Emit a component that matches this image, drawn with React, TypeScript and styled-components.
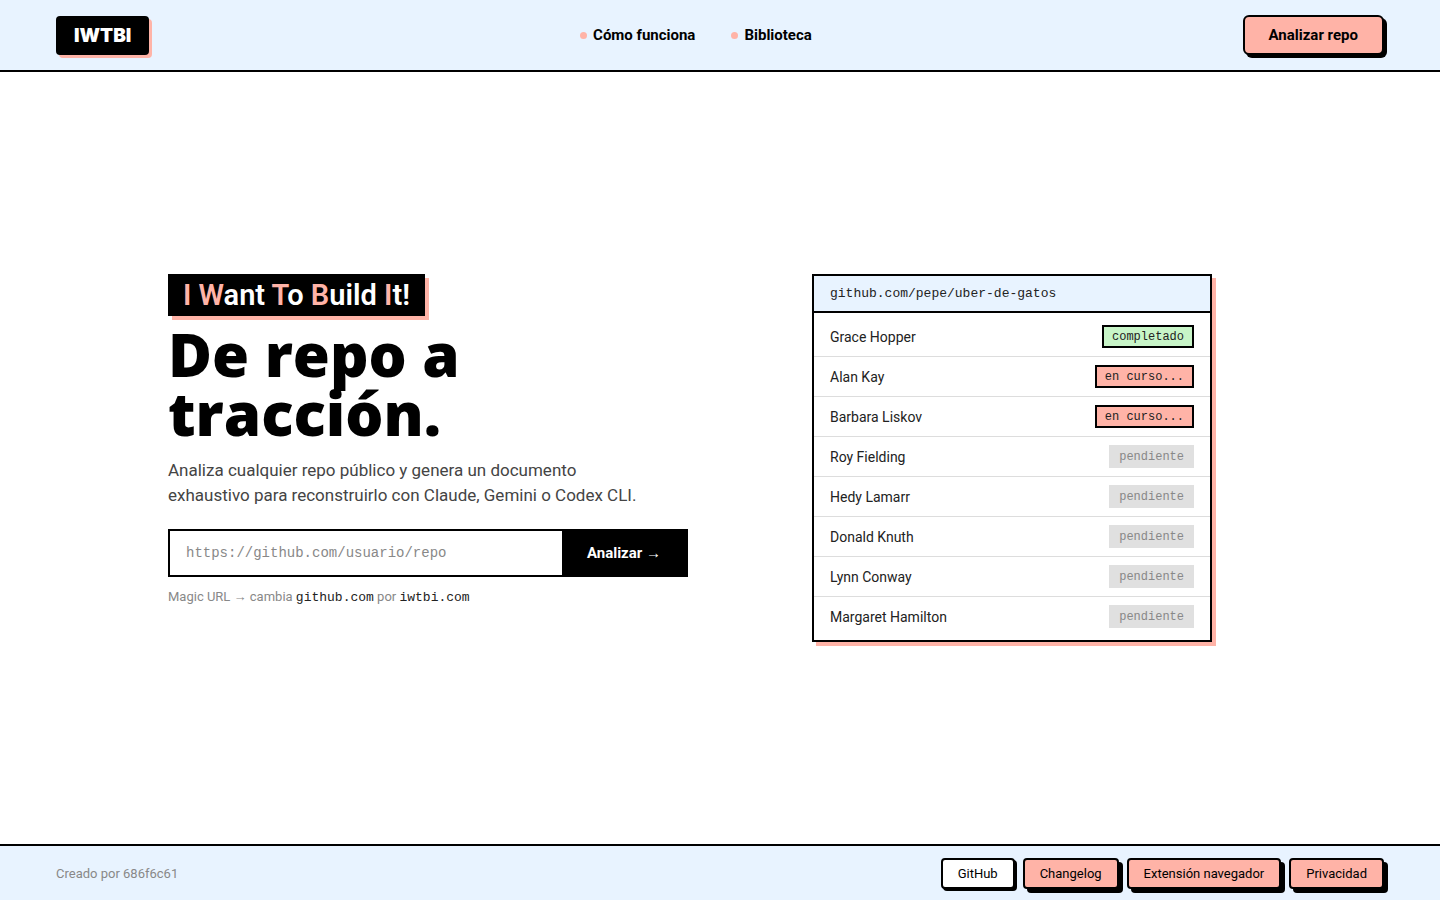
import React from "react";
import styled, { createGlobalStyle } from "styled-components";

const coral = "#ffb3a7";
const ice = "#e8f3ff";
const sans = `Roboto, "Liberation Sans", sans-serif`;
const display = `"Open Sans", Inter, sans-serif`;
const mono = `"Liberation Mono", monospace`;

const GlobalStyle = createGlobalStyle`
  *, *::before, *::after { box-sizing: border-box; }
  body {
    margin: 0;
    background: #fff;
    color: #222;
    font-family: ${sans};
  }
  button, input { font: inherit; }
  a { color: inherit; text-decoration: none; }
`;

const Page = styled.div`
  display: flex;
  flex-direction: column;
  min-height: 100vh;
`;

const Header = styled.header`
  display: flex;
  align-items: center;
  justify-content: space-between;
  height: 72px;
  padding: 0 56px;
  background: ${ice};
  border-bottom: 2px solid #000;
`;

const Logo = styled.a`
  padding: 8px 18px;
  border-radius: 4px;
  background: #000;
  color: #fff;
  box-shadow: 3px 3px 0 ${coral};
  font-family: Inter, sans-serif;
  font-size: 19px;
  font-weight: 900;
  line-height: 23px;
`;

const Nav = styled.nav`
  display: flex;
  gap: 36px;
`;

const NavLink = styled.a`
  display: flex;
  align-items: center;
  gap: 6px;
  color: #000;
  font-size: 15px;
  font-weight: 700;
  line-height: 20px;

  &::before {
    content: "";
    width: 7px;
    height: 7px;
    border-radius: 50%;
    background: ${coral};
  }
`;

const HeaderButton = styled.button`
  height: 40px;
  padding: 0 24px;
  border: 2px solid #000;
  border-radius: 6px;
  background: ${coral};
  color: #000;
  box-shadow: 3px 3px 0 #000;
  font-size: 15px;
  font-weight: 700;
  cursor: pointer;
`;

const Main = styled.main`
  flex: 1;
  display: grid;
  place-content: center;
  grid-template-columns: minmax(0, 1200px);
`;

const Hero = styled.div`
  display: grid;
  grid-template-columns: 1fr 1fr;
  gap: 64px;
  align-items: start;
  padding: 0 48px;
`;

const Intro = styled.section`
  display: flex;
  flex-direction: column;
  align-items: flex-start;
`;

const Tagline = styled.p`
  margin: 0;
  padding: 4px 15px;
  background: #000;
  color: #fff;
  box-shadow: 4px 4px 0 ${coral};
  font-size: 29px;
  font-weight: 600;
  line-height: 34px;

  b {
    color: ${coral};
    font-weight: inherit;
  }
`;

const Title = styled.h1`
  margin: 9px 0 0;
  color: #000;
  font-family: ${display};
  font-size: 60px;
  font-weight: 800;
  line-height: 59px;
`;

const Lead = styled.p`
  max-width: 480px;
  margin: 15px 0 0;
  color: #444;
  font-size: 17px;
  line-height: 25px;
`;

const RepoForm = styled.form`
  display: flex;
  width: 100%;
  height: 48px;
  margin-top: 21px;
  border: 2px solid #000;
`;

const RepoInput = styled.input`
  flex: 1;
  min-width: 0;
  padding: 0 16px;
  border: 0;
  outline: 0;
  background: #fff;
  color: #222;
  font-family: ${mono};
  font-size: 14px;

  &::placeholder { color: #888; opacity: 1; }
`;

const SubmitButton = styled.button`
  padding: 0 25px;
  border: 0;
  background: #000;
  color: #fff;
  font-size: 15px;
  font-weight: 700;
  cursor: pointer;
`;

const Arrow = styled.span`
  font-family: "Liberation Sans", sans-serif;
  font-weight: 400;
`;

const Hint = styled.p`
  margin: 10px 0 0;
  color: #888;
  font-size: 13px;
  line-height: 20px;

  code {
    color: #222;
    font-family: ${mono};
  }
`;

const Card = styled.section`
  justify-self: center;
  width: 100%;
  max-width: 400px;
  border: 2px solid #000;
  background: #fff;
  box-shadow: 4px 4px 0 ${coral};
`;

const CardTitle = styled.h2`
  margin: 0;
  padding: 8px 16px 7px;
  border-bottom: 2px solid #000;
  background: ${ice};
  color: #222;
  font-family: ${mono};
  font-size: 13px;
  font-weight: 400;
  line-height: 20px;
`;

const People = styled.ul`
  margin: 0;
  padding: 4px 0;
  list-style: none;
`;

const Person = styled.li`
  display: flex;
  align-items: center;
  justify-content: space-between;
  padding: 8px 16px;
  font-size: 14px;
  line-height: 23px;

  & + & { border-top: 1px solid #ddd; }
`;

const PersonName = styled.span`
  padding-top: 1px;
  line-height: 22px;
`;

type Status = "completado" | "en curso..." | "pendiente";

const statusFill: Record<Status, string> = {
  completado: "#c8f5c8",
  "en curso...": coral,
  pendiente: "#e0e0e0",
};

const Badge = styled.span<{ $status: Status }>`
  padding: 1px 8px 0;
  border: 2px solid ${(p) => (p.$status === "pendiente" ? "#e0e0e0" : "#000")};
  background: ${(p) => statusFill[p.$status]};
  color: ${(p) => (p.$status === "pendiente" ? "#888" : "#222")};
  font-family: ${mono};
  font-size: 12px;
  line-height: 18px;
`;

const Footer = styled.footer`
  display: flex;
  align-items: center;
  justify-content: space-between;
  height: 56px;
  padding: 0 56px;
  border-top: 2px solid #000;
  background: ${ice};
  color: #888;
  font-size: 13px;
`;

const FooterNav = styled.nav`
  display: flex;
  gap: 8px;
`;

const FooterLink = styled.a<{ $plain?: boolean }>`
  padding: 4px 15px;
  border: 2px solid #000;
  border-radius: 4px;
  background: ${(p) => (p.$plain ? "#fff" : coral)};
  color: #000;
  box-shadow: ${(p) => (p.$plain ? "2px 2px" : "4px 4px")} 0 #000;
  font-size: 13px;
  line-height: 19px;
`;

const people: { name: string; status: Status }[] = [
  { name: "Grace Hopper", status: "completado" },
  { name: "Alan Kay", status: "en curso..." },
  { name: "Barbara Liskov", status: "en curso..." },
  { name: "Roy Fielding", status: "pendiente" },
  { name: "Hedy Lamarr", status: "pendiente" },
  { name: "Donald Knuth", status: "pendiente" },
  { name: "Lynn Conway", status: "pendiente" },
  { name: "Margaret Hamilton", status: "pendiente" },
];

export default function App() {
  return (
    <Page>
      <GlobalStyle />
      <Header>
        <Logo href="#">IWTBI</Logo>
        <Nav>
          <NavLink href="#como-funciona">Cómo funciona</NavLink>
          <NavLink href="#biblioteca">Biblioteca</NavLink>
        </Nav>
        <HeaderButton type="button">Analizar repo</HeaderButton>
      </Header>
      <Main>
        <Hero>
          <Intro>
            <Tagline>
              <b>I</b> <b>W</b>ant <b>T</b>o <b>B</b>uild <b>I</b>t!
            </Tagline>
            <Title>
              De repo a<br />
              tracción.
            </Title>
            <Lead>
              Analiza cualquier repo público y genera un documento exhaustivo
              para reconstruirlo con Claude, Gemini o Codex CLI.
            </Lead>
            <RepoForm onSubmit={(e) => e.preventDefault()}>
              <RepoInput
                type="url"
                aria-label="URL del repositorio"
                placeholder="https://github.com/usuario/repo"
              />
              <SubmitButton type="submit">
                Analizar <Arrow>→</Arrow>
              </SubmitButton>
            </RepoForm>
            <Hint>
              Magic URL <Arrow>→</Arrow> cambia <code>github.com</code> por{" "}
              <code>iwtbi.com</code>
            </Hint>
          </Intro>
          <Card>
            <CardTitle>github.com/pepe/uber-de-gatos</CardTitle>
            <People>
              {people.map((p) => (
                <Person key={p.name}>
                  <PersonName>{p.name}</PersonName>
                  <Badge $status={p.status}>{p.status}</Badge>
                </Person>
              ))}
            </People>
          </Card>
        </Hero>
      </Main>
      <Footer>
        <span>Creado por 686f6c61</span>
        <FooterNav>
          <FooterLink href="#github" $plain>GitHub</FooterLink>
          <FooterLink href="#changelog">Changelog</FooterLink>
          <FooterLink href="#extension">Extensión navegador</FooterLink>
          <FooterLink href="#privacidad">Privacidad</FooterLink>
        </FooterNav>
      </Footer>
    </Page>
  );
}
